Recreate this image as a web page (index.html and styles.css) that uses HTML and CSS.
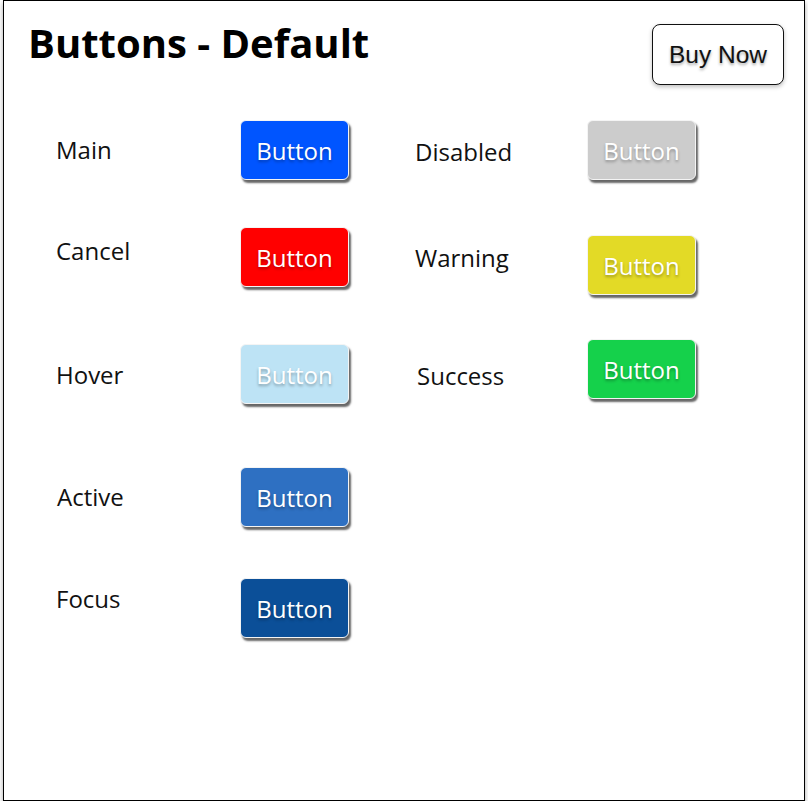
FILE: index.html
```html
<!DOCTYPE html>
<html>
<head>
<meta charset="utf-8">
<link rel="stylesheet" href="styles.css">
</head>
<body>
<div class="frame">
  <header class="header">
    <h1 class="title">Buttons - Default</h1>
    <button class="buy">Buy Now</button>
  </header>
  <section class="columns">
    <div class="col col-left">
      <div class="row r1"><span class="label l-main">Main</span><span class="btn main">Button</span></div>
      <div class="row r2"><span class="label l-cancel">Cancel</span><span class="btn cancel">Button</span></div>
      <div class="row r3"><span class="label l-hover">Hover</span><span class="btn hover">Button</span></div>
      <div class="row r4"><span class="label l-active">Active</span><span class="btn active">Button</span></div>
      <div class="row r5"><span class="label l-focus">Focus</span><span class="btn focus">Button</span></div>
    </div>
    <div class="col col-right">
      <div class="row r1"><span class="label l-disabled">Disabled</span><span class="btn disabled">Button</span></div>
      <div class="row rw"><span class="label l-warning">Warning</span><span class="btn warning">Button</span></div>
      <div class="row rs"><span class="label l-success">Success</span><span class="btn success">Button</span></div>
    </div>
  </section>
</div>
</body>
</html>
```
FILE: styles.css
```css
* { box-sizing: border-box; }
html, body { margin: 0; padding: 0; background: #fff; }
body { font-family: "Open Sans", "DejaVu Sans", sans-serif; color: #111; }

.frame {
  margin-left: 3px;
  width: 802px;
  height: 801px;
  border: 1px solid #000;
  background: #fff;
  box-shadow: 0 3px 5px rgba(0,0,0,0.35);
}

.header {
  display: flex;
  justify-content: space-between;
  align-items: flex-start;
  padding: 19px 20px 0 24px;
}
.title {
  margin: 0;
  font-size: 40px;
  line-height: 46px;
  font-weight: 700;
  color: #000;
}
.buy {
  margin-top: 4px;
  width: 132px;
  height: 61px;
  padding: 0;
  background: #fff;
  border: 1px solid #111;
  border-radius: 8px;
  box-shadow: 0 2px 4px rgba(0,0,0,0.25);
  font-family: "Liberation Sans", Arial, sans-serif;
  font-size: 24.5px;
  color: #111;
  text-shadow: 0 2px 3px rgba(0,0,0,0.35);
}

.columns {
  display: flex;
  padding-left: 52px;
  gap: 66px;
}
.col { display: flex; flex-direction: column; }
.row { display: flex; align-items: flex-start; }
.col-left .label { width: 184px; }
.col-right .label { width: 172px; }
.label {
  font-size: 24px;
  line-height: 30px;
  color: #111;
}

.r1 { margin-top: 35px; }
.r2 { margin-top: 47px; }
.r3 { margin-top: 57px; }
.r4 { margin-top: 63px; }
.r5 { margin-top: 51px; }
.rw { margin-top: 55px; }
.rs { margin-top: 44px; }

.l-main { margin-top: 15px; }
.l-cancel { margin-top: 9px; }
.l-hover { margin-top: 16px; }
.l-active { margin-top: 15px; padding-left: 1px; }
.l-focus { margin-top: 6px; }
.l-disabled { margin-top: 17px; }
.l-warning { margin-top: 8px; }
.l-success { margin-top: 22px; padding-left: 2px; }

.btn {
  display: flex;
  align-items: center;
  justify-content: center;
  width: 109px;
  height: 60px;
  border: 1px solid #f4f4f4;
  border-radius: 6px;
  color: #fff;
  font-size: 24px;
  text-shadow: 0 2px 3px rgba(0,0,0,0.3);
  box-shadow: 2px 3px 2px rgba(0,0,0,0.6);
}
.main { background: #0055ff; }
.cancel { background: #ff0000; }
.hover { background: #bde3f5; }
.active { background: #2e70c2; }
.focus { background: #0b4f98; }
.disabled { background: #cccccc; }
.warning { background: #e3da26; }
.success { background: #15d14b; }
```
